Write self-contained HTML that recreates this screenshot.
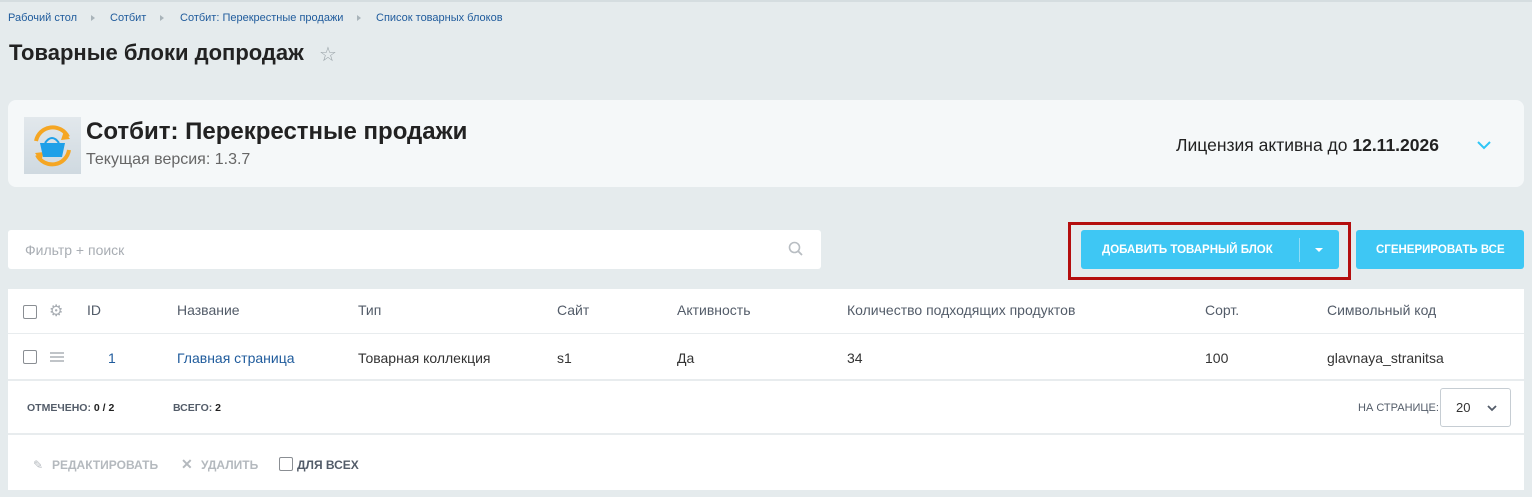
<!DOCTYPE html>
<html><head><meta charset="utf-8"><style>
*{margin:0;padding:0;box-sizing:border-box}
body{width:1532px;height:497px;background:#e5ebed;font-family:"Liberation Sans",Arial,sans-serif;position:relative;overflow:hidden;color:#333}
.a{position:absolute;white-space:nowrap}
.bc{top:12px;font-size:11px;color:#1f5b9c}
.sep{width:0;height:0;border-left:4px solid #a9b4ba;border-top:3px solid transparent;border-bottom:3px solid transparent;top:15px}
.th{top:302px;font-size:14px;color:#535c69}
.td{top:350px;font-size:14px;color:#333}
.cb{width:14px;height:14px;border:1px solid #8a8e93;border-radius:2px;background:#fff}
.small{font-size:10.5px;font-weight:bold;color:#535c69}
</style></head><body>
<div class="a" style="left:0;top:0;width:1532px;height:2px;background:#d5dde0"></div>
<div class="a bc" style="left:8px">Рабочий стол</div>
<div class="a sep" style="left:91px"></div>
<div class="a bc" style="left:110px">Сотбит</div>
<div class="a sep" style="left:160px"></div>
<div class="a bc" style="left:180px">Сотбит: Перекрестные продажи</div>
<div class="a sep" style="left:357px"></div>
<div class="a bc" style="left:376px">Список товарных блоков</div>
<div class="a" style="left:9px;top:40px;font-size:22px;font-weight:bold;color:#222">Товарные блоки допродаж</div>
<div class="a" style="left:319px;top:42px;font-size:20px;color:#9aa3a8">☆</div>

<div class="a" style="left:8px;top:100px;width:1516px;height:87px;background:#f5f8f9;border-radius:8px"></div>
<div class="a" style="left:24px;top:117px;width:57px;height:57px;background:linear-gradient(#e2e8ec,#cfd9e0)">
<svg width="57" height="57" viewBox="0 0 57 57"><path d="M12 24 A17 17 0 0 1 44 20" stroke="#f5a623" stroke-width="4" fill="none"/><path d="M45 33 A17 17 0 0 1 13 38" stroke="#f5a623" stroke-width="4" fill="none"/><path d="M40 14 l6 8 l-9 1z" fill="#f5a623"/><path d="M17 44 l-6 -8 l9 -1z" fill="#f5a623"/><path d="M16 26 h25 l-3 14 h-19z" fill="#1ea0e8"/><path d="M21 26 q7 -10 14 0" stroke="#1ea0e8" stroke-width="2" fill="none"/></svg></div>
<div class="a" style="left:86px;top:118px;font-size:24px;font-weight:bold;color:#222">Сотбит: Перекрестные продажи</div>
<div class="a" style="left:86px;top:151px;font-size:16px;color:#666">Текущая версия: 1.3.7</div>
<div class="a" style="left:1176px;top:135px;font-size:17.5px;color:#222">Лицензия активна до <b>12.11.2026</b></div>
<svg class="a" style="left:1476px;top:139px" width="16" height="12"><path d="M2 3 l6 6 l6 -6" stroke="#2fc6f6" stroke-width="2" fill="none"/></svg>

<div class="a" style="left:8px;top:230px;width:813px;height:39px;background:#fff;border-radius:3px"></div>
<div class="a" style="left:25px;top:242px;font-size:14px;color:#a8adb3">Фильтр + поиск</div>
<svg class="a" style="left:788px;top:241px" width="16" height="16"><circle cx="6.5" cy="6.5" r="5" stroke="#b8bdc2" stroke-width="1.6" fill="none"/><path d="M10 10 l4 4" stroke="#b8bdc2" stroke-width="1.8"/></svg>

<div class="a" style="left:1068px;top:222px;width:283px;height:58px;border:3px solid #b40e0e"></div>
<div class="a" style="left:1081px;top:230px;width:258px;height:39px;background:#3ec7f4;border-radius:3px"></div>
<div class="a" style="left:1102px;top:244px;font-size:11.5px;font-weight:bold;color:#fff">ДОБАВИТЬ ТОВАРНЫЙ БЛОК</div>
<div class="a" style="left:1299px;top:238px;width:1px;height:24px;background:#8fdcf7"></div>
<div class="a" style="left:1315px;top:248px;border-left:4px solid transparent;border-right:4px solid transparent;border-top:4px solid #fff"></div>
<div class="a" style="left:1356px;top:230px;width:168px;height:39px;background:#3ec7f4;border-radius:3px"></div>
<div class="a" style="left:1376px;top:244px;font-size:11.5px;font-weight:bold;color:#fff">СГЕНЕРИРОВАТЬ ВСЕ</div>

<div class="a" style="left:8px;top:289px;width:1516px;height:201px;background:#fff"></div>
<div class="a" style="left:8px;top:333px;width:1516px;height:1px;background:#e8ecee"></div>
<div class="a" style="left:8px;top:379px;width:1516px;height:2px;background:#e8ecee"></div>
<div class="a" style="left:8px;top:433px;width:1516px;height:2px;background:#e8ecee"></div>
<div class="a cb" style="left:23px;top:305px"></div>
<div class="a" style="left:49px;top:301px;font-size:16px;color:#a8adb3">⚙</div>
<div class="a th" style="left:87px">ID</div>
<div class="a th" style="left:177px">Название</div>
<div class="a th" style="left:358px">Тип</div>
<div class="a th" style="left:557px">Сайт</div>
<div class="a th" style="left:677px">Активность</div>
<div class="a th" style="left:847px">Количество подходящих продуктов</div>
<div class="a th" style="left:1205px">Сорт.</div>
<div class="a th" style="left:1327px">Символьный код</div>

<div class="a cb" style="left:23px;top:350px"></div>
<div class="a" style="left:50px;top:352px;width:14px;height:2px;background:#c0c4c8;box-shadow:0 4px 0 #c0c4c8,0 8px 0 #c0c4c8"></div>
<div class="a td" style="left:108px;color:#1f5b9c">1</div>
<div class="a td" style="left:177px;color:#1f5b9c">Главная страница</div>
<div class="a td" style="left:358px">Товарная коллекция</div>
<div class="a td" style="left:557px">s1</div>
<div class="a td" style="left:677px">Да</div>
<div class="a td" style="left:847px">34</div>
<div class="a td" style="left:1205px">100</div>
<div class="a td" style="left:1327px">glavnaya_stranitsa</div>

<div class="a small" style="left:27px;top:402px">ОТМЕЧЕНО: <span style="color:#222">0 / 2</span></div>
<div class="a small" style="left:173px;top:402px">ВСЕГО: <span style="color:#222">2</span></div>
<div class="a small" style="left:1358px;top:402px;font-weight:normal;font-size:11px">НА СТРАНИЦЕ:</div>
<div class="a" style="left:1440px;top:388px;width:71px;height:39px;border:1px solid #c6cdd3;border-radius:3px;background:#fff"></div>
<div class="a" style="left:1456px;top:400px;font-size:13px;color:#333">20</div>
<svg class="a" style="left:1486px;top:403px" width="12" height="10"><path d="M2 3 l4 4 l4 -4" stroke="#535c69" stroke-width="1.8" fill="none"/></svg>

<div class="a" style="left:33px;top:458px;font-size:12px;color:#b4b9be">✎</div>
<div class="a" style="left:52px;top:458px;font-size:12px;font-weight:bold;color:#b4b9be">РЕДАКТИРОВАТЬ</div>
<div class="a" style="left:181px;top:456px;font-size:14px;font-weight:bold;color:#b4b9be">✕</div>
<div class="a" style="left:201px;top:458px;font-size:12px;font-weight:bold;color:#b4b9be">УДАЛИТЬ</div>
<div class="a cb" style="left:279px;top:457px"></div>
<div class="a" style="left:297px;top:458px;font-size:12px;font-weight:bold;color:#535c69">ДЛЯ ВСЕХ</div>
</body></html>
